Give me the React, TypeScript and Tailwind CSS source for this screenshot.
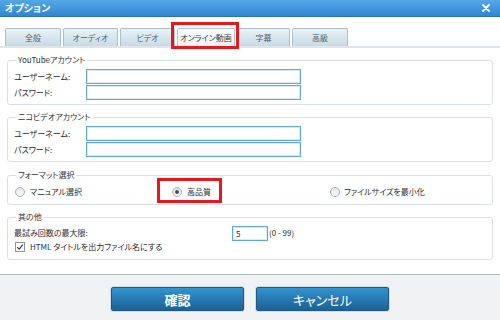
import React from "react";

const tabs = [
  { label: "全般", w: 56 },
  { label: "オーディオ", w: 55 },
  { label: "ビデオ", w: 55 },
  { label: "オンライン動画", w: 58, active: true },
  { label: "字幕", w: 53 },
  { label: "高級", w: 56 },
];

function Input({ w, value }: { w: number; value?: string }) {
  return (
    <div
      className="h-[15px] border border-[#62a7d8] bg-white shadow-[inset_0_0_0_1px_#d6eaf7] text-[8px] leading-[13px] pl-[3px] text-[#222]"
      style={{ width: w }}
    >
      {value}
    </div>
  );
}

function Radio({ checked }: { checked?: boolean }) {
  return (
    <div className="w-[10px] h-[10px] rounded-full border border-[#a9adb1] bg-gradient-to-b from-[#e4e6e8] to-[#fafafa] flex items-center justify-center">
      {checked && <div className="w-[4px] h-[4px] rounded-full bg-[#4a4f55]" />}
    </div>
  );
}

function Group({ title, children, className }: { title: string; children: React.ReactNode; className?: string }) {
  return (
    <fieldset className={"mx-[7px] border border-[#d8e0e6] rounded-[3px] px-[6px] " + (className ?? "")}>
      <legend className="ml-[2px] px-[2px] text-[8px] leading-[10px] text-[#333]">{title}</legend>
      {children}
    </fieldset>
  );
}

export default function App() {
  return (
    <div className="relative w-[500px] h-[320px] bg-white flex flex-col overflow-hidden font-['Noto_Sans_CJK_JP',sans-serif] [font-feature-settings:'palt'] text-[#2a2a2a]">
      {/* title bar */}
      <div className="h-[17px] shrink-0 bg-gradient-to-b from-[#55a8e6] to-[#2f86d2] border-b border-[#2a72b5] flex items-center justify-between pl-[5px] pr-[10px]">
        <span className="text-white font-bold text-[10px] leading-none">オプション</span>
        <svg width="8" height="8" viewBox="0 0 8 8">
          <path d="M1 1L7 7M7 1L1 7" stroke="white" strokeWidth="1.8" strokeLinecap="round" />
        </svg>
      </div>

      {/* tabs */}
      <div className="shrink-0 pt-[11px] px-[5px] flex items-end gap-[2px] border-b-2 border-[#dfe6eb]">
        {tabs.map((t) => (
          <div
            key={t.label}
            style={{ width: t.w }}
            className={
              "h-[18px] rounded-t-[2px] border border-b-0 flex items-center justify-center text-[8px] leading-none " +
              (t.active
                ? "bg-gradient-to-b from-[#f9fbfc] to-[#eef2f5] border-[#b2c3ce] text-[#3a434b]"
                : "bg-gradient-to-b from-[#eaf2f6] to-[#c8dbe5] border-[#a9c1cf] text-[#56616b]")
            }
          >
            {t.label}
          </div>
        ))}
      </div>

      {/* content */}
      <div className="flex flex-col pt-[7px]">
        <Group title="YouTubeアカウント" className="pt-[4px] pb-[4px]">
          <div className="flex flex-col gap-[1px]">
            <div className="flex items-center">
              <span className="w-[72px] text-[8px]">ユーザーネーム:</span>
              <Input w={215} />
            </div>
            <div className="flex items-center">
              <span className="w-[72px] text-[8px]">パスワード:</span>
              <Input w={215} />
            </div>
          </div>
        </Group>

        <Group title="ニコビデオアカウント" className="mt-[7px] pt-[4px] pb-[4px]">
          <div className="flex flex-col gap-[1px]">
            <div className="flex items-center">
              <span className="w-[72px] text-[8px]">ユーザーネーム:</span>
              <Input w={215} />
            </div>
            <div className="flex items-center">
              <span className="w-[72px] text-[8px]">パスワード:</span>
              <Input w={215} />
            </div>
          </div>
        </Group>

        <Group title="フォーマット選択" className="mt-[8px] pt-[5px] pb-[5px]">
          <div className="flex items-center h-[14px] text-[8px]">
            <div className="w-[158px] flex items-center gap-[5px] pl-[1px]">
              <Radio />
              <span>マニュアル選択</span>
            </div>
            <div className="w-[158px] flex items-center gap-[5px]">
              <Radio checked />
              <span>高品質</span>
            </div>
            <div className="flex items-center gap-[4px]">
              <Radio />
              <span>ファイルサイズを最小化</span>
            </div>
          </div>
        </Group>

        <Group title="其の他" className="mt-[7px] pt-[3px] pb-[6px]">
          <div className="flex items-center h-[16px] text-[8px]">
            <span className="w-[218px]">最試み回数の最大限:</span>
            <Input w={36} value="5" />
            <span className="ml-[1px]">(0 - 99)</span>
          </div>
          <div className="flex items-center h-[12px] text-[8px] gap-[5px] pl-[1px]">
            <div className="w-[10px] h-[10px] border border-[#8f959a] bg-white flex items-center justify-center">
              <svg width="8" height="8" viewBox="0 0 8 8">
                <path d="M1.2 4.2L3.2 6.2L6.8 1.6" stroke="#333" strokeWidth="1.1" fill="none" />
              </svg>
            </div>
            <span>
              <span className="text-[#1d3557]">HTML</span> タイトルを出力ファイル名にする
            </span>
          </div>
        </Group>
      </div>

      {/* footer */}
      <div className="mt-auto h-[46px] shrink-0 border-t border-[#adb6bc] bg-[#f1f2f4] flex justify-center pt-[12px] gap-[12px]">
        <button className="w-[133px] h-[24px] rounded-[2px] border border-[#1d5a86] bg-gradient-to-b from-[#3294d0] to-[#1c6196] text-white font-bold text-[13px] leading-none shadow-[0_0_0_1px_#d6dadd]">
          確認
        </button>
        <button className="w-[133px] h-[24px] rounded-[2px] border border-[#1d5a86] bg-gradient-to-b from-[#3294d0] to-[#1c6196] text-white text-[13px] leading-none shadow-[0_0_0_1px_#d6dadd]">
          キャンセル
        </button>
      </div>

      {/* annotation boxes */}
      <div className="absolute left-[171px] top-[22px] w-[68px] h-[27px] border-[3px] border-[#e5171f]" />
      <div className="absolute left-[157px] top-[178px] w-[65px] h-[25px] border-[3px] border-[#e5171f]" />
    </div>
  );
}
